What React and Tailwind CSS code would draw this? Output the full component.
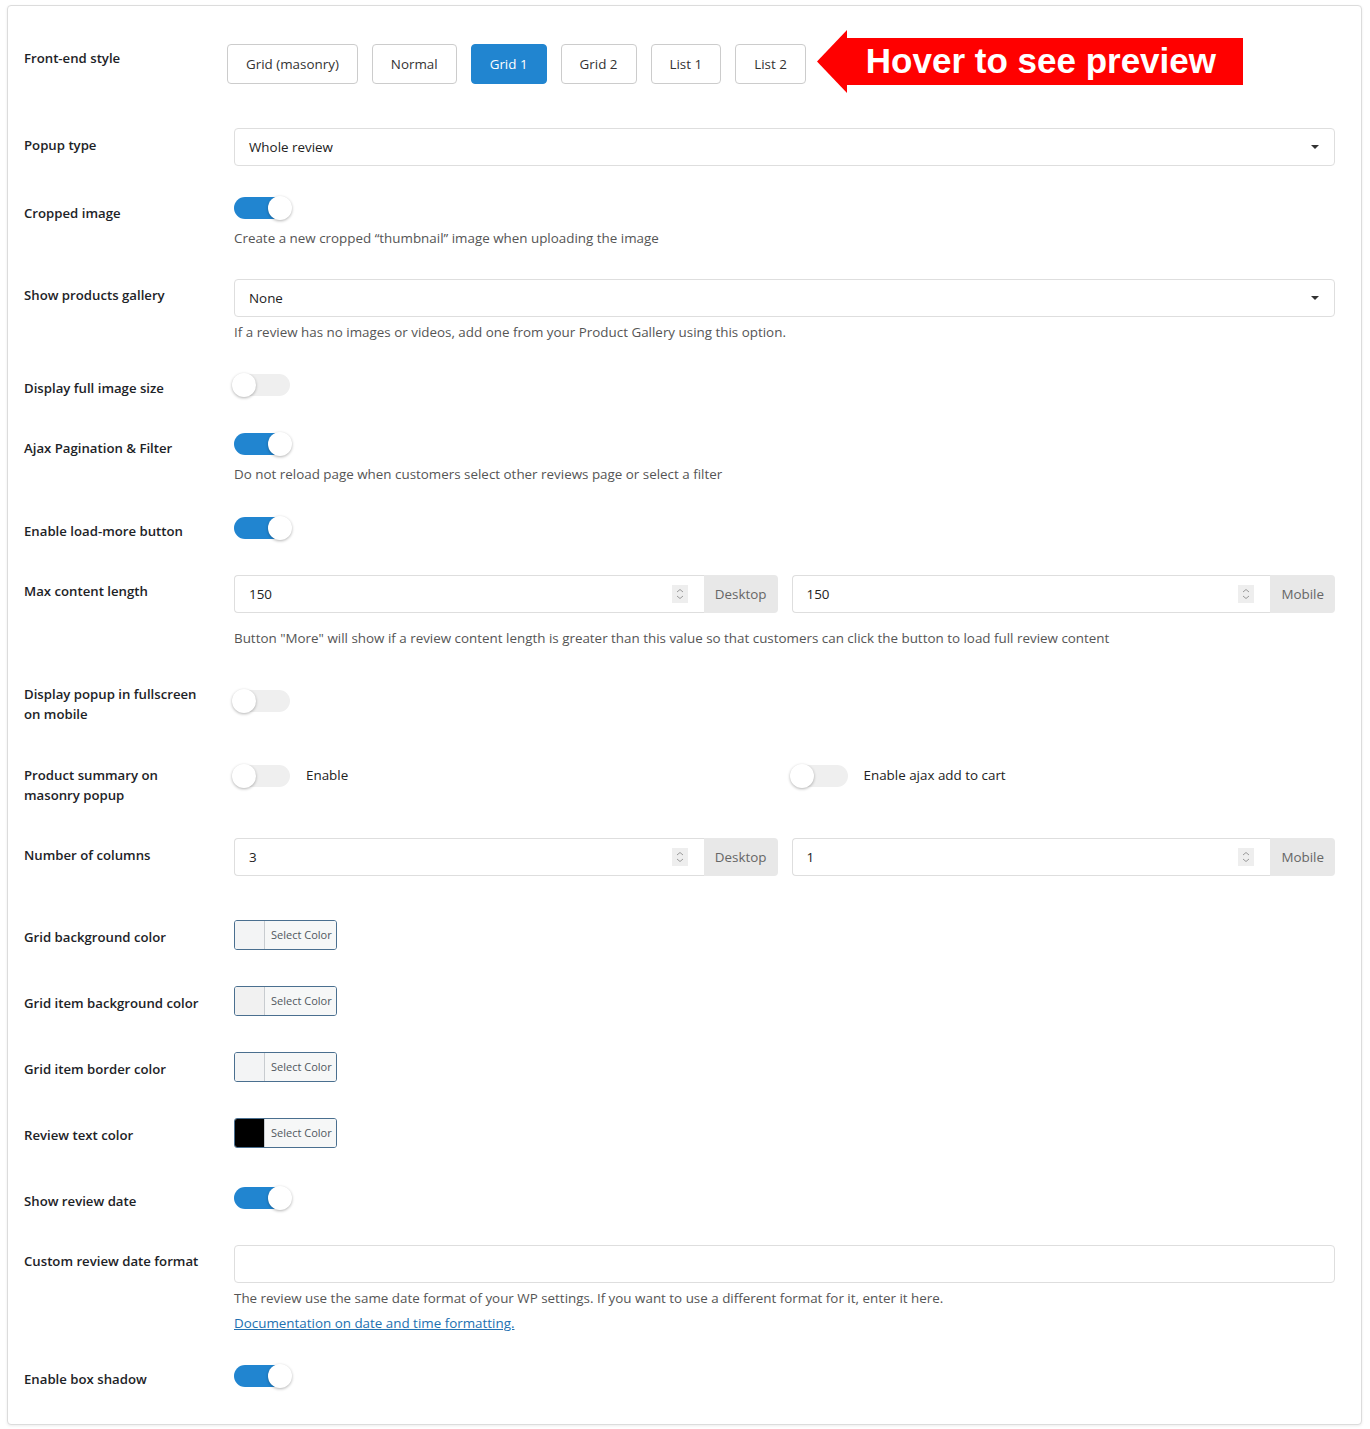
import React from 'react'

const font = { fontFamily: '"Open Sans", "Noto Sans", sans-serif' }

const Row = ({ h, lpt, cpt = '', label, children }) => (
    <div className={`flex ${h}`}>
        <div className={`w-[210px] shrink-0 pr-[28px] ${lpt} text-[13.2px] font-semibold leading-[20px] text-[#1d2327]`}>{label}</div>
        <div className={`flex-1 min-w-0 ${cpt}`}>{children}</div>
    </div>
)

const Toggle = ({ on }) => (
    <div className={`relative w-[56px] h-[22px] mt-[1px] rounded-full ${on ? 'bg-[#2185d0]' : 'bg-[#efefef]'}`}>
        <div className={`absolute top-[-1px] w-[24px] h-[24px] rounded-full bg-white shadow-[0_1px_3px_rgba(0,0,0,0.3)] ${on ? 'right-[-2px]' : 'left-[-2px]'}`}></div>
    </div>
)

const Desc = ({ className = '', children }) => (
    <p className={`text-[13.4px] leading-[18px] text-[#555] ${className}`}>{children}</p>
)

const Select = ({ value }) => (
    <div className='flex items-center justify-between h-[38px] border border-[#dedede] rounded-[4px] pl-[14px] pr-[15px] text-[13.4px] text-[#222]'>
        <span className='pt-[1px]'>{value}</span>
        <span className='w-0 h-0 border-l-[4px] border-r-[4px] border-t-[4px] border-l-transparent border-r-transparent border-t-[#333]'></span>
    </div>
)

const Spinner = () => (
    <svg width="16" height="18" viewBox="0 0 16 18">
        <rect width="16" height="18" fill="#eeeeee" />
        <path d="M5 7 L8 4.5 L11 7" fill="none" stroke="#999" strokeWidth="1" />
        <path d="M5 11 L8 13.5 L11 11" fill="none" stroke="#999" strokeWidth="1" />
    </svg>
)

const NumberInput = ({ value, unit }) => (
    <div className='flex-1 flex h-[38px]'>
        <div className='flex-1 flex items-center justify-between border border-r-0 border-[#dedede] rounded-l-[4px] pl-[14px] pr-[16px] text-[13.4px] text-[#222]'>
            <span className='pt-[1px]'>{value}</span>
            <Spinner />
        </div>
        <div className='flex items-center px-[11px] bg-[#e8e8e8] rounded-r-[4px] text-[13.4px] text-[#666]'>{unit}</div>
    </div>
)

const ColorButton = ({ color }) => (
    <div className='flex w-[103px] h-[30px] border border-[#4a6f8f] rounded-[3px] overflow-hidden'>
        <div className={`w-[30px] border-r border-[#c8ccd0] ${color}`}></div>
        <div className='flex-1 flex items-center pl-[6px] bg-[#f6f7f7] text-[11px] text-[#50575e]'>Select Color</div>
    </div>
)

const styles = ['Grid (masonry)', 'Normal', 'Grid 1', 'Grid 2', 'List 1', 'List 2']

const App = () => {
    return (
        <div className='min-h-[1429px] bg-white' style={font}>
            <div className='ml-[7px] mt-[5px] w-[1355px] h-[1420px] border border-[#dcdcdc] rounded-[4px] shadow-[0_1px_3px_rgba(0,0,0,0.08)] bg-white pl-[16px] pr-[26px] pt-[38px]'>
                <Row h='h-[84px]' lpt='pt-[4px]' label='Front-end style'>
                    <div className='flex items-center h-[40px] -ml-[7px] gap-[14px]'>
                        {styles.map((s) => (
                            <div key={s} className={`h-[40px] flex items-center px-[18px] rounded-[4px] text-[13.4px] border ${s === 'Grid 1' ? 'bg-[#2185d0] border-[#2185d0] text-white' : 'bg-white border-[#cccccc] text-[#333]'}`}>{s}</div>
                        ))}
                        <div className='flex items-center ml-[-3px] mb-[5px] shrink-0'>
                            <svg width="30" height="63" viewBox="0 0 30 63"><polygon points="0,31.5 30,0 30,63" fill="#ff0000" /></svg>
                            <div className='h-[47px] w-[396px] bg-[#ff0000] flex items-center pl-[19px] pb-[2px] text-white text-[35px] font-bold leading-none' style={{ fontFamily: '"Liberation Sans", Arial, sans-serif' }}>Hover to see preview</div>
                        </div>
                    </div>
                </Row>
                <Row h='h-[68px]' lpt='pt-[7px]' label='Popup type'>
                    <Select value='Whole review' />
                </Row>
                <Row h='h-[83px]' lpt='pt-[7px]' label='Cropped image'>
                    <Toggle on />
                    <Desc className='mt-[10px]'>Create a new cropped “thumbnail” image when uploading the image</Desc>
                </Row>
                <Row h='h-[94px]' lpt='pt-[6px]' label='Show products gallery'>
                    <Select value='None' />
                    <Desc className='mt-[6px]'>If a review has no images or videos, add one from your Product Gallery using this option.</Desc>
                </Row>
                <Row h='h-[59px]' lpt='pt-[5px]' label='Display full image size'>
                    <Toggle />
                </Row>
                <Row h='h-[84px]' lpt='pt-[6px]' label='Ajax Pagination & Filter'>
                    <Toggle on />
                    <Desc className='mt-[10px]'>Do not reload page when customers select other reviews page or select a filter</Desc>
                </Row>
                <Row h='h-[59px]' lpt='pt-[5px]' label='Enable load-more button'>
                    <Toggle on />
                </Row>
                <Row h='h-[109px]' lpt='pt-[6px]' label='Max content length'>
                    <div className='flex gap-[14px]'>
                        <NumberInput value='150' unit='Desktop' />
                        <NumberInput value='150' unit='Mobile' />
                    </div>
                    <Desc className='mt-[16px]'>Button "More" will show if a review content length is greater than this value so that customers can click the button to load full review content</Desc>
                </Row>
                <Row h='h-[80px]' lpt='pt-0' cpt='pt-[5px]' label='Display popup in fullscreen on mobile'>
                    <Toggle />
                </Row>
                <Row h='h-[74px]' lpt='pt-[1px]' label='Product summary on masonry popup'>
                    <div className='flex gap-[14px]'>
                        <div className='flex-1 flex items-center gap-[16px]'>
                            <Toggle />
                            <span className='text-[13.4px] text-[#222]'>Enable</span>
                        </div>
                        <div className='flex-1 flex items-center gap-[16px]'>
                            <Toggle />
                            <span className='text-[13.4px] text-[#222]'>Enable ajax add to cart</span>
                        </div>
                    </div>
                </Row>
                <Row h='h-[82px]' lpt='pt-[7px]' label='Number of columns'>
                    <div className='flex gap-[14px]'>
                        <NumberInput value='3' unit='Desktop' />
                        <NumberInput value='1' unit='Mobile' />
                    </div>
                </Row>
                <Row h='h-[66px]' lpt='pt-[7px]' label='Grid background color'>
                    <ColorButton color='bg-[#f3f4f5]' />
                </Row>
                <Row h='h-[66px]' lpt='pt-[7px]' label='Grid item background color'>
                    <ColorButton color='bg-[#f1f1f1]' />
                </Row>
                <Row h='h-[66px]' lpt='pt-[7px]' label='Grid item border color'>
                    <ColorButton color='bg-[#f3f4f5]' />
                </Row>
                <Row h='h-[68px]' lpt='pt-[7px]' label='Review text color'>
                    <ColorButton color='bg-black' />
                </Row>
                <Row h='h-[59px]' lpt='pt-[5px]' label='Show review date'>
                    <Toggle on />
                </Row>
                <Row h='h-[119px]' lpt='pt-[6px]' label='Custom review date format'>
                    <div className='h-[38px] border border-[#dedede] rounded-[4px]'></div>
                    <Desc className='mt-[6px]'>The review use the same date format of your WP settings. If you want to use a different format for it, enter it here.</Desc>
                    <a href='#' className='block mt-[7px] text-[13.4px] leading-[18px] text-[#2271b1] underline'>Documentation on date and time formatting.</a>
                </Row>
                <Row h='h-[60px]' lpt='pt-[5px]' label='Enable box shadow'>
                    <Toggle on />
                </Row>
            </div>
        </div>
    )
}

export default App
